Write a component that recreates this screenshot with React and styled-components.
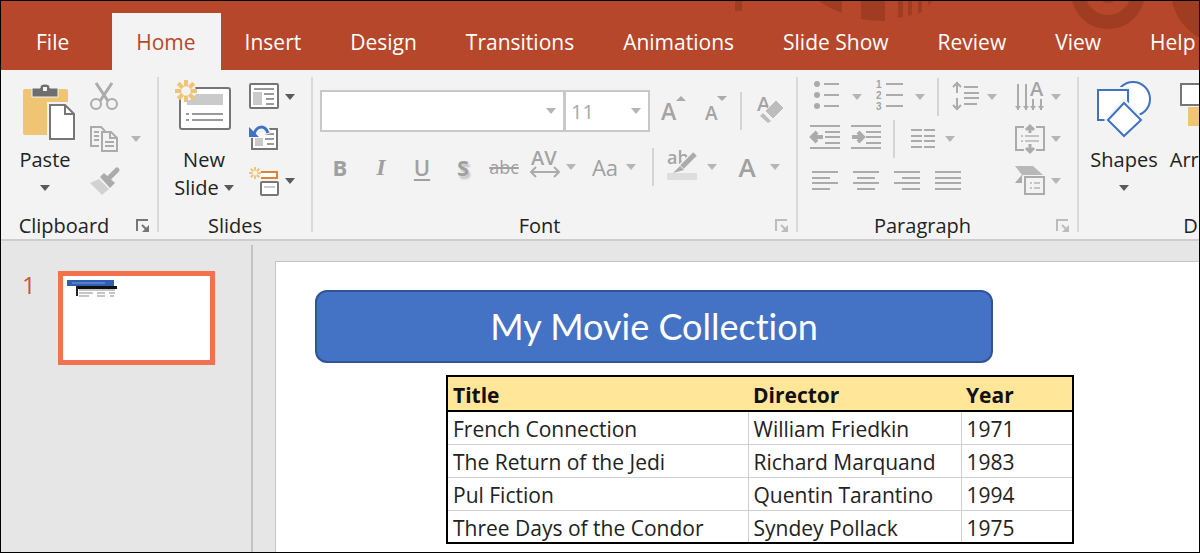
import React, { useState } from 'react'
import styled, { createGlobalStyle } from 'styled-components'

const tabs = ['File', 'Home', 'Insert', 'Design', 'Transitions', 'Animations', 'Slide Show', 'Review', 'View', 'Help']

const movies = [
    { title: 'French Connection', director: 'William Friedkin', year: 1971 },
    { title: 'The Return of the Jedi', director: 'Richard Marquand', year: 1983 },
    { title: 'Pul Fiction', director: 'Quentin Tarantino', year: 1994 },
    { title: 'Three Days of the Condor', director: 'Syndey Pollack', year: 1975 },
]

const GREY = '#ababab'
const DARK = '#767676'
const ORANGE = '#efc573'
const BLUE = '#3f72c1'

// horizontal strokes, each one as [x1, x2, y]
const Lines = ({ rows, color = GREY }) => (
    <g stroke={color} strokeWidth="2">
        {rows.map(([x1, x2, y]) => <path key={`${x1}-${y}`} d={`M${x1} ${y}H${x2}`} />)}
    </g>
)

const Icon = ({ width = 30, height = 30, children }) => (
    <svg width={width} height={height} viewBox={`0 0 ${width} ${height}`} fill="none" overflow="visible" aria-hidden="true">
        {children}
    </svg>
)

const Caret = ({ color = '#b5b5b5' }) => (
    <svg width="10" height="6" viewBox="0 0 10 6" aria-hidden="true">
        <path d="M0 0H10L5 6Z" fill={color} />
    </svg>
)

const Sun = ({ x, y, r, width }) => (
    <g transform={`translate(${x} ${y})`} stroke={ORANGE} strokeWidth={width}>
        {[0, 45, 90, 135, 180, 225, 270, 315].map((angle) => (
            <path key={angle} d={`M0 ${-r * 0.42}V${-r}`} transform={`rotate(${angle})`} />
        ))}
    </g>
)

const PasteIcon = () => (
    <Icon width={62} height={60}>
        <rect x="9" y="9" width="45" height="46" rx="2" fill={ORANGE} />
        <path d="M18 8H26C26 5 28 4 31 4C34 4 36 5 36 8H44V17H18Z" fill="#6e6e6e" stroke="#f3f3f3" strokeWidth="1" />
        <rect x="29" y="7" width="4" height="4" fill="#f3f3f3" />
        <rect x="33" y="22" width="30" height="37" fill="#f3f3f3" />
        <path d="M36 25H51L60 34V59H36Z" fill="#fff" stroke={DARK} strokeWidth="2" />
        <path d="M51 25V34H60" stroke={DARK} strokeWidth="2" />
    </Icon>
)

const CutIcon = () => (
    <Icon>
        <path d="M7 1L19 19M23 1L11 19" stroke={GREY} strokeWidth="3" />
        <circle cx="7" cy="22" r="5" stroke={GREY} strokeWidth="2" fill="#f3f3f3" />
        <circle cx="23" cy="22" r="5" stroke={GREY} strokeWidth="2" fill="#f3f3f3" />
    </Icon>
)

const CopyIcon = () => (
    <Icon>
        <path d="M10 22H2V3H12L16 7" stroke={GREY} strokeWidth="2" />
        <Lines rows={[[5, 10, 8], [5, 10, 12], [5, 10, 16]]} />
        <path d="M13 8H22L28 14V27H13Z" fill="#f3f3f3" stroke={GREY} strokeWidth="2" />
        <path d="M21 8V14H28" stroke={GREY} strokeWidth="2" />
        <Lines rows={[[16, 25, 18], [16, 25, 22]]} />
    </Icon>
)

const BrushIcon = () => (
    <Icon>
        <path d="M1 17L10 13L20 23L13 29Z" fill="#d2d2d2" />
        <path d="M11 11L15 7L26 17L21 22Z" fill={GREY} />
        <path d="M20 12L28 4" stroke={GREY} strokeWidth="5" strokeLinecap="round" />
    </Icon>
)

const NewSlideIcon = () => (
    <Icon width={60} height={60}>
        <rect x="6" y="8" width="50" height="41" rx="2" fill="#fff" stroke={DARK} strokeWidth="2" />
        <rect x="13" y="14" width="36" height="11" fill="#cacaca" />
        <Lines rows={[[12, 15, 34], [18, 49, 34], [12, 15, 40], [18, 49, 40]]} color="#9a9a9a" />
        <circle cx="12" cy="11" r="10" fill="#f3f3f3" />
        <Sun x={12} y={11} r={11} width={4} />
    </Icon>
)

const LayoutIcon = () => (
    <Icon>
        <rect x="1" y="2" width="28" height="24" rx="1" fill="#fff" stroke={DARK} strokeWidth="2" />
        <rect x="4" y="10" width="9" height="13" fill="#cacaca" />
        <Lines rows={[[5, 25, 7], [15, 25, 12], [17, 25, 17], [17, 25, 22]]} color="#9a9a9a" />
    </Icon>
)

const ResetIcon = () => (
    <Icon>
        <path d="M20 5H28V25H3V14" fill="#fff" stroke={DARK} strokeWidth="2" />
        <rect x="6" y="14" width="8" height="8" fill="#cacaca" />
        <Lines rows={[[16, 25, 10], [16, 25, 15], [18, 25, 20]]} color="#9a9a9a" />
        <path d="M4 10C7 1 16 1 19 10" stroke="#f3f3f3" strokeWidth="7" />
        <path d="M5 10C8 1 16 1 19 9" stroke={BLUE} strokeWidth="3" />
        <path d="M0 3V13H10Z" fill={BLUE} />
    </Icon>
)

const SectionIcon = () => (
    <Icon>
        <path d="M12 6H28V12H12" fill="#fff" stroke="#e08238" strokeWidth="2" />
        <rect x="12" y="16" width="17" height="13" rx="1" fill="#fff" stroke={DARK} strokeWidth="2" />
        <rect x="15" y="20" width="11" height="2" fill="#cacaca" />
        <Sun x={6} y={7} r={6} width={2} />
    </Icon>
)

const GrowIcon = () => (
    <Icon>
        <SvgText x="3" y="24" $size={23}>A</SvgText>
        <path d="M18 5L23 0L28 5Z" fill={GREY} />
    </Icon>
)

const ShrinkIcon = () => (
    <Icon>
        <SvgText x="5" y="24" $size={19}>A</SvgText>
        <path d="M17 0H27L22 5Z" fill={GREY} />
    </Icon>
)

const EraserIcon = () => (
    <Icon>
        <SvgText x="1" y="15" $size={20}>A</SvgText>
        <path d="M20 4L28 12L17 23L9 15Z" fill="#bdbdbd" stroke="#f3f3f3" strokeWidth="1" />
        <path d="M7 17L15 25L12 27L4 20Z" fill="#bdbdbd" />
    </Icon>
)

const SpacingIcon = () => (
    <Icon>
        <SvgText x="1" y="13" $size={20}>AV</SvgText>
        <path d="M1 20H29M6 15L1 20L6 25M24 15L29 20L24 25" stroke={GREY} strokeWidth="2" />
    </Icon>
)

const HighlightIcon = () => (
    <Icon>
        <SvgText x="0" y="12" $size={18}>ab</SvgText>
        <rect x="0" y="21" width="30" height="7" fill="#dedede" />
        <path d="M28 2L14 16" stroke="#f3f3f3" strokeWidth="8" />
        <path d="M28 2L15 15" stroke={GREY} strokeWidth="5" />
        <path d="M13 14L17 18L6 21Z" fill={GREY} />
    </Icon>
)

const BulletsIcon = () => (
    <Icon>
        {[2, 13, 24].map((y) => <circle key={y} cx="5" cy={y} r="3" fill={GREY} />)}
        <Lines rows={[[12, 27, 2], [12, 27, 13], [12, 27, 24]]} />
    </Icon>
)

const NumbersIcon = () => (
    <Icon>
        {[1, 2, 3].map((n) => <NumberText key={n} x="1" y={n * 11 - 5}>{n}</NumberText>)}
        <Lines rows={[[11, 28, 2], [11, 28, 13], [11, 28, 24]]} />
    </Icon>
)

const LineSpacingIcon = () => (
    <Icon>
        <path d="M6 0V11M2 5L6 1L10 5M6 16V28M2 23L6 27L10 23" stroke={GREY} strokeWidth="2" />
        <Lines rows={[[13, 27, 5], [13, 28, 11], [13, 28, 16], [13, 26, 22]]} />
    </Icon>
)

const TextDirectionIcon = () => (
    <Icon>
        <path d="M3 2V28M11 2V28M18 17V28M26 17V28" stroke={GREY} strokeWidth="2" />
        <path d="M0 24L3 28L6 24ZM8 24L11 28L14 24ZM15 24L18 28L21 24ZM23 24L26 28L29 24Z" fill={GREY} />
        <SvgText x="15" y="14" $size={20}>A</SvgText>
    </Icon>
)

const IndentIcon = ({ flip }) => (
    <Icon>
        <Lines rows={[[0, 30, 2], [15, 30, 8], [15, 30, 13], [15, 30, 19], [0, 30, 24]]} />
        <path
            d="M13 13H3M7 8L2 13L7 18"
            transform={flip ? 'translate(14 0) scale(-1 1)' : undefined}
            stroke={GREY}
            strokeWidth="4"
        />
    </Icon>
)

const ColumnsIcon = () => (
    <Icon>
        <Lines rows={[[2, 13, 6], [2, 13, 12], [2, 13, 17], [2, 13, 23], [15, 26, 6], [15, 26, 12], [15, 26, 17], [15, 26, 23]]} />
    </Icon>
)

const AlignTextIcon = () => (
    <Icon>
        <path d="M9 3H1V26H9M21 3H29V26H21" stroke={GREY} strokeWidth="2" />
        <path d="M15 2V9M11 6L15 2L19 6M15 20V28M11 24L15 28L19 24" stroke={GREY} strokeWidth="3" />
        <Lines rows={[[6, 8, 12], [10, 24, 12], [6, 8, 17], [10, 24, 17]]} color="#c4c4c4" />
    </Icon>
)

const SmartArtIcon = () => (
    <Icon>
        <path d="M0 0H18L28 9H8L0 17L7 9Z" fill="#b8b8b8" />
        <path d="M0 17L7 9V17Z" fill={GREY} />
        <rect x="10" y="11" width="19" height="17" fill="#f3f3f3" stroke={GREY} strokeWidth="2" />
        <Lines rows={[[15, 17, 17], [19, 25, 17], [15, 17, 22], [19, 25, 22]]} color="#c4c4c4" />
    </Icon>
)

const alignRows = {
    left: [[1, 27], [1, 19], [1, 27], [1, 19]],
    center: [[1, 27], [5, 23], [1, 27], [5, 23]],
    right: [[1, 27], [9, 27], [1, 27], [9, 27]],
    justify: [[1, 27], [1, 27], [1, 27], [1, 27]],
}

const AlignIcon = ({ align }) => (
    <Icon>
        <Lines rows={alignRows[align].map(([x1, x2], i) => [x1, x2, 6 + Math.round(i * 5.5)])} />
    </Icon>
)

const ShapesIcon = () => (
    <Icon width={60} height={60}>
        <circle cx="39" cy="19" r="17" fill="#fff" stroke={BLUE} strokeWidth="2" />
        <rect x="2" y="7" width="34" height="34" fill="#f3f3f3" />
        <rect x="4" y="10" width="30" height="30" fill="#fff" stroke={BLUE} strokeWidth="2" />
        <path d="M30 18L51 40L30 60L10 40Z" fill="#f3f3f3" />
        <path d="M30 23L47 40L30 56L14 40Z" fill="#fff" stroke={BLUE} strokeWidth="2" />
    </Icon>
)

const ArrangeIcon = () => (
    <Icon width={56} height={60}>
        <rect x="9" y="27" width="38" height="19" fill={ORANGE} />
        <rect x="2" y="4" width="22" height="21" fill="#fff" stroke={DARK} strokeWidth="2" />
        <rect x="32" y="34" width="22" height="21" fill="#fff" stroke={DARK} strokeWidth="2" />
    </Icon>
)

const HeaderArt = () => (
    <Art viewBox="0 0 480 68" fill="#9f3c22" aria-hidden="true">
        <path d="M16 0H23V10H16Z" />
        <path d="M100 0H123V12Q110 7 100 0Z" />
        <path d="M142 0H166V20Q153 20 142 18Z" />
        <path d="M179 0H184V16L179 17ZM189 0H193V14L189 15ZM199 0H203V11L199 13ZM209 0H213L209 5Z" />
        <circle cx="389" cy="-9" r="30" fill="none" stroke="#9f3c22" strokeWidth="14" />
        <circle cx="389" cy="-9" r="11" />
        <circle cx="506" cy="-11" r="54" />
    </Art>
)

const Thumbnail = () => (
    <svg width="147" height="84" viewBox="0 0 147 84" aria-hidden="true">
        <rect x="4" y="4" width="47" height="6" fill="#2f5fb3" />
        <path d="M9 7H42" stroke="#7f9fd8" strokeWidth="1" />
        <rect x="14" y="10" width="40" height="3" fill="#111" />
        <rect x="13" y="10" width="2" height="10" fill="#222" />
        <path d="M16 14H52M16 17H30M34 17H42M46 17H52M16 20H26M34 20H42M47 20H51" stroke="#c6c6c6" strokeWidth="2" />
    </svg>
)

const GroupLabel = ({ children, launcher, dim }) => (
    <LabelRow>
        <span>{children}</span>
        {launcher && (
            <Launcher aria-label={`${children} options`}>
                <Icon width={14} height={14}>
                    <path d="M1 12V1H12M6 6L12 12" stroke={dim ? '#bcbcbc' : DARK} strokeWidth="2" />
                    <path d="M13 6V13H6Z" fill={dim ? '#bcbcbc' : DARK} />
                </Icon>
            </Launcher>
        )}
    </LabelRow>
)

const Tool = ({ label, children, caret, caretColor, ...rest }) => (
    <ToolButton aria-label={label} {...rest}>
        {children}
        {caret && <Caret color={caretColor} />}
    </ToolButton>
)

const App = () => {
    const [activeTab, setActiveTab] = useState('Home')
    const [font, setFont] = useState('')
    const [size, setSize] = useState('11')

    return (
        <Page>
            <GlobalStyle />
            <Header>
                <HeaderArt />
                <Tabs>
                    {tabs.map((tab) => (
                        <Tab key={tab} $active={tab === activeTab} $wide={tab === 'File'} onClick={() => setActiveTab(tab)}>
                            {tab}
                        </Tab>
                    ))}
                </Tabs>
            </Header>

            <Ribbon>
                <Group $width={156}>
                    <GroupBody>
                        <BigTool $width={88}>
                            <PasteIcon />
                            <span>Paste</span>
                            <span><Caret color="#5a5a5a" /></span>
                        </BigTool>
                        <Rows>
                            <Row><Tool label="Cut"><CutIcon /></Tool></Row>
                            <Row><Tool label="Copy" $gap={12} caret><CopyIcon /></Tool></Row>
                            <Row><Tool label="Format Painter"><BrushIcon /></Tool></Row>
                        </Rows>
                    </GroupBody>
                    <GroupLabel launcher>Clipboard</GroupLabel>
                </Group>
                <Divider />

                <Group $width={152}>
                    <GroupBody>
                        <BigTool $width={90}>
                            <NewSlideIcon />
                            <span>New</span>
                            <span>Slide <Caret color="#5a5a5a" /></span>
                        </BigTool>
                        <Rows>
                            <Row><Tool label="Layout" caret caretColor="#5a5a5a"><LayoutIcon /></Tool></Row>
                            <Row><Tool label="Reset"><ResetIcon /></Tool></Row>
                            <Row><Tool label="Section" caret caretColor="#5a5a5a"><SectionIcon /></Tool></Row>
                        </Rows>
                    </GroupBody>
                    <GroupLabel>Slides</GroupLabel>
                </Group>
                <Divider />

                <Group $width={483}>
                    <GroupBody>
                        <Rows $pad={7}>
                            <Row $tall>
                                <Combo $width={245}>
                                    <input aria-label="Font name" value={font} onChange={(e) => setFont(e.target.value)} />
                                    <button aria-label="Show fonts"><Caret /></button>
                                </Combo>
                                <Combo $width={86}>
                                    <input aria-label="Font size" value={size} onChange={(e) => setSize(e.target.value)} />
                                    <button aria-label="Show font sizes"><Caret /></button>
                                </Combo>
                                <Tool label="Increase font size" $width={46}><GrowIcon /></Tool>
                                <Tool label="Decrease font size" $width={38}><ShrinkIcon /></Tool>
                                <ToolDivider />
                                <Tool label="Clear formatting" $width={46}><EraserIcon /></Tool>
                            </Row>
                            <Row>
                                <Tool label="Bold" $width={40}><Bold>B</Bold></Tool>
                                <Tool label="Italic" $width={42}><Italic>I</Italic></Tool>
                                <Tool label="Underline" $width={40}><Underline>U</Underline></Tool>
                                <Tool label="Shadow" $width={42}><Shadow>S</Shadow></Tool>
                                <Tool label="Strikethrough" $width={40}><Strike>abc</Strike></Tool>
                                <Tool label="Character spacing" $width={58} caret><SpacingIcon /></Tool>
                                <Tool label="Change case" $width={64} $gap={8} caret><Glyph>Aa</Glyph></Tool>
                                <ToolDivider />
                                <Tool label="Highlight colour" $width={64} $gap={10} caret><HighlightIcon /></Tool>
                                <Tool label="Font colour" $width={70} $gap={14} caret><BigGlyph>A</BigGlyph></Tool>
                            </Row>
                        </Rows>
                    </GroupBody>
                    <GroupLabel launcher dim>Font</GroupLabel>
                </Group>
                <Divider />

                <Group $width={279}>
                    <GroupBody>
                        <Rows $pad={7}>
                            <Row>
                                <Tool label="Bullets" $width={64} $gap={10} caret><BulletsIcon /></Tool>
                                <Tool label="Numbering" $width={62} $gap={10} caret><NumbersIcon /></Tool>
                                <ToolDivider />
                                <Tool label="Line spacing" $width={58} caret><LineSpacingIcon /></Tool>
                                <Tool label="Text direction" $width={62} $end caret><TextDirectionIcon /></Tool>
                            </Row>
                            <Row>
                                <Tool label="Decrease indent" $width={40}><IndentIcon /></Tool>
                                <Tool label="Increase indent" $width={42}><IndentIcon flip /></Tool>
                                <ToolDivider />
                                <Tool label="Columns" $width={62} caret><ColumnsIcon /></Tool>
                                <Tool label="Align text" $width={62} $end caret><AlignTextIcon /></Tool>
                            </Row>
                            <Row>
                                <Tool label="Align left" $width={42}><AlignIcon align="left" /></Tool>
                                <Tool label="Center" $width={40}><AlignIcon align="center" /></Tool>
                                <Tool label="Align right" $width={42}><AlignIcon align="right" /></Tool>
                                <Tool label="Justify" $width={40}><AlignIcon align="justify" /></Tool>
                                <Tool label="Convert to SmartArt" $width={62} $end caret><SmartArtIcon /></Tool>
                            </Row>
                        </Rows>
                    </GroupBody>
                    <GroupLabel launcher dim>Paragraph</GroupLabel>
                </Group>
                <Divider />

                <Group $width={286}>
                    <GroupBody>
                        <BigTool $width={90}>
                            <ShapesIcon />
                            <span>Shapes</span>
                            <span><Caret color="#5a5a5a" /></span>
                        </BigTool>
                        <BigTool $width={76}>
                            <ArrangeIcon />
                            <span>Arrange</span>
                            <span><Caret color="#5a5a5a" /></span>
                        </BigTool>
                    </GroupBody>
                    <GroupLabel>Drawing</GroupLabel>
                </Group>
            </Ribbon>

            <Workspace>
                <SlideList>
                    <SlideItem>
                        <SlideNumber>1</SlideNumber>
                        <ThumbButton aria-label="Slide 1"><Thumbnail /></ThumbButton>
                    </SlideItem>
                </SlideList>
                <Slide>
                    <Banner>My Movie Collection</Banner>
                    <Table>
                        <colgroup>
                            <TitleCol />
                            <DirectorCol />
                            <YearCol />
                        </colgroup>
                        <thead>
                            <tr>
                                <th>Title</th>
                                <th>Director</th>
                                <th>Year</th>
                            </tr>
                        </thead>
                        <tbody>
                            {movies.map((movie) => (
                                <tr key={movie.title}>
                                    <td>{movie.title}</td>
                                    <td>{movie.director}</td>
                                    <td>{movie.year}</td>
                                </tr>
                            ))}
                        </tbody>
                    </Table>
                </Slide>
            </Workspace>
        </Page>
    )
}

export default App

const GlobalStyle = createGlobalStyle`
    * {
        box-sizing: border-box;
    }

    body {
        margin: 0;
        font-family: "Open Sans", "Noto Sans", sans-serif;
        color: #222;
    }

    button {
        padding: 0;
        border: 0;
        background: none;
        font: inherit;
        color: inherit;
        cursor: pointer;
    }
`;

const Page = styled.div`
    display: flex;
    flex-direction: column;
    height: 100vh;
    border: 1px solid #000;
    background: #e6e6e6;
    overflow: hidden;
`;

const Header = styled.header`
    position: relative;
    flex: none;
    background: #b7472a;
    overflow: hidden;
`;

const Art = styled.svg`
    position: absolute;
    top: 0;
    right: 0;
    width: 480px;
    height: 68px;
`;

const Tabs = styled.nav`
    position: relative;
    display: flex;
    padding-top: 12px;
`;

const Tab = styled.button`
    flex: none;
    height: 57px;
    padding: ${(props) => (props.$wide ? '0 43px 0 35px' : '0 25px 0 24px')};
    background: ${(props) => (props.$active ? '#f3f3f3' : 'transparent')};
    color: ${(props) => (props.$active ? '#b7472a' : '#fff')};
    font-size: 21px;
    white-space: nowrap;
`;

const Ribbon = styled.div`
    display: flex;
    flex: none;
    padding-top: 6px;
    border-bottom: 2px solid #cdcdcd;
    background: #f3f3f3;
    overflow: hidden;
`;

const Group = styled.section`
    flex: none;
    width: ${(props) => props.$width}px;
`;

const Divider = styled.div`
    flex: none;
    width: 2px;
    margin: 1px 0 7px;
    background: #d9d9d9;
`;

const GroupBody = styled.div`
    display: flex;
    height: 126px;
`;

const LabelRow = styled.div`
    display: flex;
    align-items: center;
    margin-top: 10px;
    font-size: 20px;
    line-height: 27px;
    text-align: center;

    span {
        flex: 1;
    }
`;

const Launcher = styled.button`
    display: flex;
    margin: 0 7px 0 9px;
`;

const BigTool = styled.button`
    display: flex;
    flex: none;
    flex-direction: column;
    align-items: center;
    width: ${(props) => props.$width}px;
    padding-top: 4px;
    font-size: 20px;
    line-height: 28px;

    > svg {
        margin-bottom: 6px;
    }

    span {
        display: flex;
        align-items: center;
        gap: 5px;
        height: 29px;
    }
`;

const Rows = styled.div`
    flex: 1;
    padding: 0 ${(props) => (props.$pad ? 8 : 0)}px 0 ${(props) => props.$pad || 0}px;
`;

const Row = styled.div`
    display: flex;
    align-items: center;
    height: ${(props) => (props.$tall ? 70 : 42)}px;
`;

const ToolButton = styled.button`
    display: flex;
    flex: none;
    align-items: center;
    justify-content: center;
    gap: ${(props) => props.$gap || 6}px;
    width: ${(props) => (props.$width ? `${props.$width}px` : 'auto')};
    margin-left: ${(props) => (props.$end ? 'auto' : 0)};
    color: #a0a0a0;
`;

const ToolDivider = styled.div`
    flex: none;
    width: 2px;
    height: 38px;
    margin: 0 6px;
    background: #d4d4d4;
`;

const Combo = styled.div`
    display: flex;
    flex: none;
    width: ${(props) => props.$width}px;
    height: 42px;
    border: 2px solid #c8c8c8;
    background: #fff;

    & + & {
        margin-left: -1px;
    }

    input {
        flex: 1;
        min-width: 0;
        padding: 0 5px;
        border: 0;
        background: none;
        color: #a8a8a8;
        font: inherit;
        font-size: 20px;
    }

    button {
        display: flex;
        align-items: center;
        justify-content: center;
        width: 24px;
    }
`;

const Glyph = styled.span`
    font-size: 22px;
    line-height: 28px;
`;

const BigGlyph = styled(Glyph)`
    font-size: 26px;
    font-weight: 600;
`;

const Bold = styled(Glyph)`
    font-weight: 700;
`;

const Italic = styled(Glyph)`
    font-family: "Liberation Serif", serif;
    font-size: 24px;
    font-style: italic;
    font-weight: 700;
`;

const Underline = styled(Glyph)`
    font-weight: 600;
    text-decoration: underline 2px;
    text-underline-offset: 3px;
`;

const Shadow = styled(Glyph)`
    font-weight: 700;
    text-shadow: 2px 3px 2px #c4c4c4;
`;

const Strike = styled(Glyph)`
    font-size: 18px;
    text-decoration: line-through 2px;
`;

const SvgText = styled.text`
    fill: #a4a4a4;
    font-size: ${(props) => props.$size}px;
    font-weight: 600;
`;

const NumberText = styled.text`
    fill: #a4a4a4;
    font-family: "Liberation Sans", sans-serif;
    font-size: 10px;
    font-weight: 700;
`;

const Workspace = styled.main`
    display: flex;
    flex: 1;
    min-height: 0;
`;

const SlideList = styled.aside`
    flex: none;
    width: 252px;
    margin-top: 4px;
    padding: 26px 0 0 21px;
    border-right: 2px solid #c3c3c3;
`;

const SlideItem = styled.div`
    display: flex;
    align-items: flex-start;
`;

const SlideNumber = styled.span`
    width: 36px;
    color: #c9553a;
    font-size: 24px;
    line-height: 28px;
`;

const ThumbButton = styled.button`
    display: flex;
    border: 5px solid #f3714f;
    background: #fff;
`;

const Slide = styled.section`
    flex: 1;
    min-width: 0;
    margin: 20px 0 0 22px;
    padding: 28px 0 0 39px;
    border: solid #c3c3c3;
    border-width: 1px 0 0 1px;
    background: #fff;
    overflow: hidden;
`;

const Banner = styled.h1`
    width: 678px;
    margin: 0 0 12px;
    border: 2px solid #2f5597;
    border-radius: 12px;
    background: #4472c4;
    color: #fff;
    font-family: Lato, sans-serif;
    font-size: 36px;
    font-weight: 400;
    font-variant-ligatures: none;
    line-height: 69px;
    text-align: center;
`;

const Table = styled.table`
    width: 626px;
    margin-left: 131px;
    border: 2px solid #000;
    border-collapse: collapse;
    table-layout: fixed;
    color: #222;
    font-size: 21px;
    line-height: 26px;
    text-align: left;

    th {
        height: 35px;
        padding: 3px 5px 0;
        border-bottom: 2px solid #000;
        background: #ffe699;
        color: #111;
    }

    td {
        height: 33px;
        padding: 3px 5px 0;
        border: 1px solid #cfcfcf;
    }

    tbody tr:first-child td {
        border-top: 2px solid #000;
    }

    tbody tr:last-child td {
        border-bottom: 2px solid #000;
    }

    tr td:first-child {
        border-left: 2px solid #000;
    }

    tr td:last-child {
        border-right: 2px solid #000;
    }
`;

const TitleCol = styled.col`
    width: 301px;
`;

const DirectorCol = styled.col`
    width: 213px;
`;

const YearCol = styled.col`
    width: 112px;
`;
